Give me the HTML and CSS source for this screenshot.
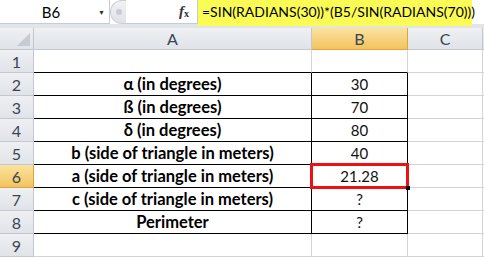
FILE: index.html
```html
<!DOCTYPE html>
<html lang="en">

<head>
    <meta charset="UTF-8">
    <title>Triangle Side - Excel</title>
    <link rel="stylesheet" href="styles.css">
</head>

<body>

    <div class="formula-bar">
        <div class="name-box">
            <span class="cell-ref">B6</span>
            <span class="drop">&#9660;</span>
        </div>
        <div class="grip"><span class="knob"></span></div>
        <div class="fx"><i>f</i><sub>x</sub></div>
        <div class="formula">=SIN(RADIANS(30))*(B5/SIN(RADIANS(70)))</div>
    </div>

    <div class="sheet">
        <!-- column headers -->
        <div class="hd corner"><span class="tri"></span></div>
        <div class="hd col">A</div>
        <div class="hd col active">B</div>
        <div class="hd col">C</div>
        <div class="hd col rest"></div>

        <!-- row 1 -->
        <div class="hd row">1</div>
        <div class="cell top"></div>
        <div class="cell top"></div>
        <div class="cell"></div>
        <div class="cell rest"></div>

        <div class="hd row">2</div>
        <div class="cell lbl boxed">α (in degrees)</div>
        <div class="cell val boxed">30</div>
        <div class="cell"></div>
        <div class="cell rest"></div>

        <div class="hd row">3</div>
        <div class="cell lbl boxed">ß (in degrees)</div>
        <div class="cell val boxed">70</div>
        <div class="cell"></div>
        <div class="cell rest"></div>

        <div class="hd row">4</div>
        <div class="cell lbl boxed">δ (in degrees)</div>
        <div class="cell val boxed">80</div>
        <div class="cell"></div>
        <div class="cell rest"></div>

        <div class="hd row">5</div>
        <div class="cell lbl boxed">b (side of triangle in meters)</div>
        <div class="cell val boxed">40</div>
        <div class="cell"></div>
        <div class="cell rest"></div>

        <div class="hd row active">6</div>
        <div class="cell lbl boxed">a (side of triangle in meters)</div>
        <div class="cell val boxed selected">21.28<span class="handle"></span></div>
        <div class="cell"></div>
        <div class="cell rest"></div>

        <div class="hd row">7</div>
        <div class="cell lbl boxed">c (side of triangle in meters)</div>
        <div class="cell val boxed">?</div>
        <div class="cell"></div>
        <div class="cell rest"></div>

        <div class="hd row">8</div>
        <div class="cell lbl boxed">Perimeter</div>
        <div class="cell val boxed">?</div>
        <div class="cell"></div>
        <div class="cell rest"></div>

        <div class="hd row">9</div>
        <div class="cell"></div>
        <div class="cell"></div>
        <div class="cell"></div>
        <div class="cell rest"></div>
    </div>

</body>

</html>
```

FILE: styles.css
```css
body {
    margin: 0;
    padding: 0;
    width: 484px;
    height: 258px;
    overflow: hidden;
    background-color: #fff;
    font-family: Lato, "Open Sans", sans-serif;
    color: #000;
}

/* formula bar */
.formula-bar {
    display: flex;
    height: 24px;
    border-bottom: 4px solid #e1e4e8;
    background-color: #fff;
}

.name-box {
    width: 110px;
    flex-shrink: 0;
    display: flex;
    align-items: center;
    border-right: 1px solid #c6ccd4;
    border-bottom: 1px solid #c6ccd4;
    box-sizing: border-box;
}

.cell-ref {
    flex: 1;
    text-align: center;
    font-size: 15px;
    padding-left: 4px;
}

.drop {
    font-size: 7px;
    color: #333;
    margin-right: 4px;
}

.grip {
    width: 16px;
    flex-shrink: 0;
    display: flex;
    align-items: center;
    justify-content: center;
    background: linear-gradient(#f1f2f4, #dfe2e6);
    border-radius: 12px 0 0 12px;
    border: 1px solid #c9ced5;
    border-right: none;
    box-sizing: border-box;
}

.knob {
    width: 6px;
    height: 6px;
    border-radius: 50%;
    background-color: #c9cdd3;
}

.fx {
    width: 72px;
    flex-shrink: 0;
    text-align: right;
    padding-right: 8px;
    box-sizing: border-box;
    border-right: 1px solid #c6ccd4;
    border-bottom: 1px solid #c6ccd4;
    font-family: "Liberation Serif", serif;
    font-size: 15px;
    font-weight: bold;
    line-height: 22px;
    color: #333;
}

.fx sub {
    font-size: 10px;
    vertical-align: -1px;
}

.formula {
    width: 274px;
    flex-shrink: 0;
    background-color: #fbfb55;
    height: 26px;
    font-size: 14px;
    line-height: 24px;
    padding-left: 4px;
    box-sizing: border-box;
    white-space: nowrap;
    position: relative;
    z-index: 1;
}

/* grid */
.sheet {
    display: grid;
    grid-template-columns: 34px 278px 96px 75px 1fr;
    grid-template-rows: 22px repeat(9, 23px);
}

.hd {
    background: linear-gradient(#eef0f3, #e0e3e8);
    border-right: 1px solid #c3c8cf;
    border-bottom: 1px solid #c3c8cf;
    color: #3b4452;
    font-size: 16px;
    display: flex;
    align-items: center;
    justify-content: center;
    box-sizing: border-box;
}

.hd.active {
    background: linear-gradient(#fbe39e, #f2c460);
    border-color: #e2a33a;
}

.corner {
    position: relative;
}

.tri {
    position: absolute;
    right: 3px;
    bottom: 3px;
    width: 0;
    height: 0;
    border-left: 13px solid transparent;
    border-bottom: 13px solid #c6cbd1;
}

.cell {
    border-right: 1px solid #d4d4d4;
    border-bottom: 1px solid #d4d4d4;
    box-sizing: border-box;
    display: flex;
    align-items: center;
    justify-content: center;
    font-size: 15px;
    white-space: nowrap;
}

.cell.rest,
.hd.rest {
    border-right: none;
}

.cell.top {
    border-bottom-color: #000;
}

.boxed {
    border-right-color: #000;
    border-bottom-color: #000;
}

.lbl {
    font-weight: bold;
    font-size: 16.5px;
}

.val {
    color: #111;
}

.selected {
    position: relative;
}

.selected::after {
    content: "";
    position: absolute;
    left: -2px;
    top: -2px;
    right: -2px;
    bottom: -2px;
    border: 3px solid #ee1111;
}

.handle {
    position: absolute;
    right: -3px;
    bottom: -3px;
    width: 4px;
    height: 4px;
    background-color: #000;
    z-index: 1;
}
```
